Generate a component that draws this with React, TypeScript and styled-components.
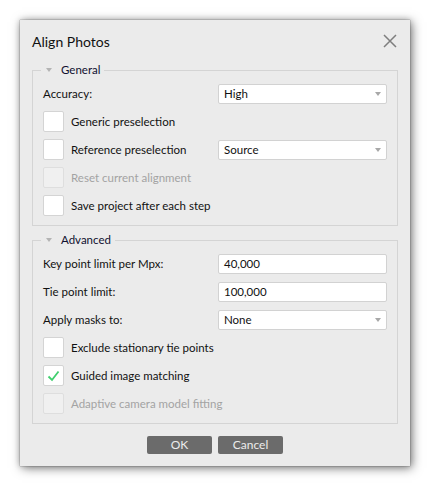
import React from 'react';
import styled, { createGlobalStyle } from 'styled-components';

const GlobalStyle = createGlobalStyle`
  html, body {
    margin: 0;
    padding: 0;
    background: #ffffff;
  }
  body {
    font-family: Lato, "Noto Sans", sans-serif;
    font-size: 11.5px;
    color: #111;
  }
`;

const Page = styled.div`
  padding: 20px;
`;

const Dialog = styled.div`
  width: 390px;
  height: 446px;
  box-sizing: border-box;
  background: #ebebeb;
  padding: 0 12px 11px;
  display: flex;
  flex-direction: column;
  box-shadow: 0 0 1px rgba(0, 0, 0, 0.6), 2px 2px 10px rgba(0, 0, 0, 0.5), 0 0 6px rgba(0, 0, 0, 0.2);
`;

const Header = styled.div`
  height: 42px;
  display: flex;
  align-items: center;
  justify-content: space-between;
`;

const Title = styled.div`
  font-size: 14px;
  color: #111;
`;

const CloseButton = styled.button`
  width: 16px;
  height: 16px;
  border: none;
  background: transparent;
  padding: 0;
  display: flex;
  align-items: center;
  justify-content: center;
`;

const Group = styled.fieldset<{ $gap?: number }>`
  margin: ${p => p.$gap ?? 0}px 0 0;
  border: 1px solid #d4d4d4;
  padding: 5px 10px 9px;
  display: flex;
  flex-direction: column;
  gap: 7px;
  min-width: 0;
`;

const Legend = styled.legend`
  margin-left: -2px;
  padding: 0 4px 0 5px;
  display: flex;
  align-items: center;
  gap: 9px;
  line-height: 16px;
  color: #101030;
`;

const Triangle = styled.span`
  width: 0;
  height: 0;
  border-left: 3.5px solid transparent;
  border-right: 3.5px solid transparent;
  border-top: 4px solid #b4b4b4;
`;

const Row = styled.div`
  height: 21px;
  display: flex;
  align-items: center;
`;

const Label = styled.div`
  width: 175px;
  flex-shrink: 0;
  display: flex;
  align-items: center;
`;

const Combo = styled.div`
  flex: 1;
  height: 20px;
  box-sizing: border-box;
  background: #fff;
  border: 1px solid #d2d2d2;
  border-radius: 2px;
  display: flex;
  align-items: center;
  justify-content: space-between;
  padding: 0 5px 0 5px;
`;

const ComboArrow = styled.span`
  width: 0;
  height: 0;
  border-left: 3.5px solid transparent;
  border-right: 3.5px solid transparent;
  border-top: 4px solid #a8a8a8;
`;

const Input = styled.div`
  flex: 1;
  height: 20px;
  box-sizing: border-box;
  background: #fff;
  border: 1px solid #d2d2d2;
  border-radius: 2px;
  display: flex;
  align-items: center;
  padding: 0 5px;
`;

const CheckBox = styled.span<{ $disabled?: boolean }>`
  width: 21px;
  height: 21px;
  box-sizing: border-box;
  flex-shrink: 0;
  background: ${p => (p.$disabled ? '#f0f0f0' : '#ffffff')};
  border: 1px solid ${p => (p.$disabled ? '#dedede' : '#d4d4d4')};
  border-radius: 2px;
  display: flex;
  align-items: center;
  justify-content: center;
`;

const CheckText = styled.span<{ $disabled?: boolean }>`
  margin-left: 7px;
  color: ${p => (p.$disabled ? '#a3a3a3' : '#111')};
`;

const Footer = styled.div`
  margin-top: 12px;
  display: flex;
  justify-content: center;
  gap: 6px;
`;

const Button = styled.button`
  width: 65px;
  height: 18px;
  padding: 0;
  border: none;
  border-radius: 2px;
  background: #6b6b6b;
  color: #ececec;
  font-family: inherit;
  font-size: 12px;
  line-height: 18px;
`;

const Check = ({ label, checked, disabled }: { label: string; checked?: boolean; disabled?: boolean }) => (
  <>
    <CheckBox $disabled={disabled}>
      {checked && (
        <svg width="13" height="12" viewBox="0 0 13 12">
          <path d="M1.5 6.5 L5 10 L11.5 1.5" fill="none" stroke="#3fcf6d" strokeWidth="1.8" />
        </svg>
      )}
    </CheckBox>
    <CheckText $disabled={disabled}>{label}</CheckText>
  </>
);

const CheckRow = (props: { label: string; checked?: boolean; disabled?: boolean }) => (
  <Row>
    <Check {...props} />
  </Row>
);

export default function App() {
  return (
    <>
      <GlobalStyle />
      <Page>
        <Dialog>
          <Header>
            <Title>Align Photos</Title>
            <CloseButton aria-label="Close">
              <svg width="14" height="14" viewBox="0 0 14 14">
                <path d="M1 1 L13 13 M13 1 L1 13" stroke="#7e7e7e" strokeWidth="1.5" />
              </svg>
            </CloseButton>
          </Header>

          <Group>
            <Legend>
              <Triangle />
              General
            </Legend>
            <Row>
              <Label>Accuracy:</Label>
              <Combo>
                High
                <ComboArrow />
              </Combo>
            </Row>
            <CheckRow label="Generic preselection" />
            <Row>
              <Label>
                <Check label="Reference preselection" />
              </Label>
              <Combo>
                Source
                <ComboArrow />
              </Combo>
            </Row>
            <CheckRow label="Reset current alignment" disabled />
            <CheckRow label="Save project after each step" />
          </Group>

          <Group $gap={6}>
            <Legend>
              <Triangle />
              Advanced
            </Legend>
            <Row>
              <Label>Key point limit per Mpx:</Label>
              <Input>40,000</Input>
            </Row>
            <Row>
              <Label>Tie point limit:</Label>
              <Input>100,000</Input>
            </Row>
            <Row>
              <Label>Apply masks to:</Label>
              <Combo>
                None
                <ComboArrow />
              </Combo>
            </Row>
            <CheckRow label="Exclude stationary tie points" />
            <CheckRow label="Guided image matching" checked />
            <CheckRow label="Adaptive camera model fitting" disabled />
          </Group>

          <Footer>
            <Button>OK</Button>
            <Button>Cancel</Button>
          </Footer>
        </Dialog>
      </Page>
    </>
  );
}
